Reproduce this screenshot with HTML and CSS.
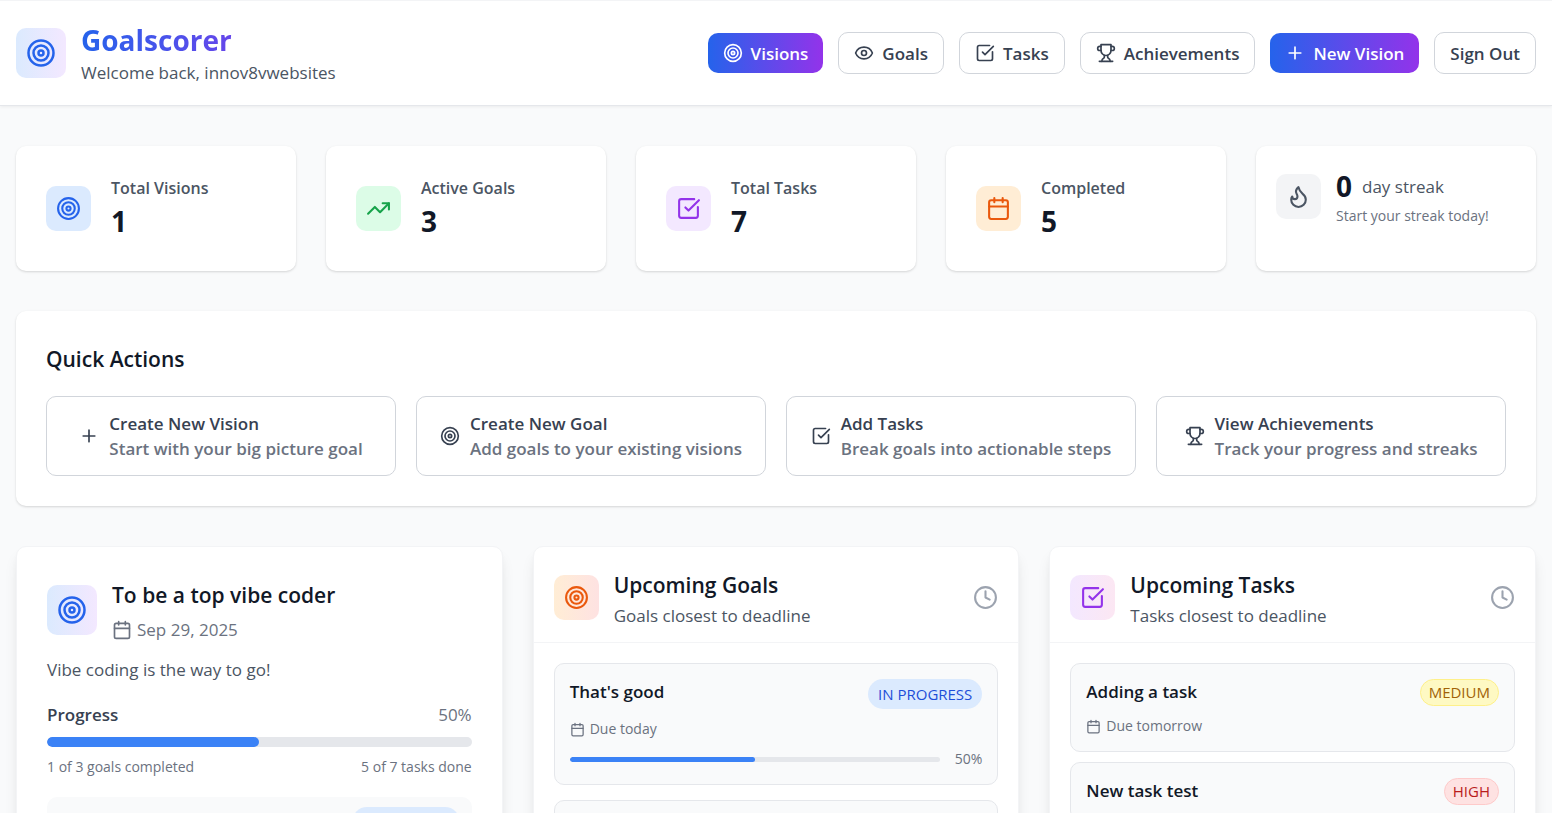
FILE: index.html
```html
<!DOCTYPE html>
<html lang="en">

<head>
  <meta charset="UTF-8">
  <meta name="viewport" content="width=device-width, initial-scale=1.0">
  <title>Goalscorer</title>
  <link rel="stylesheet" href="styles.css">
</head>

<body>
  <!-- icon set -->
  <svg class="sprite" aria-hidden="true">
    <symbol id="target" viewBox="0 0 24 24">
      <circle cx="12" cy="12" r="10" />
      <circle cx="12" cy="12" r="6" />
      <circle cx="12" cy="12" r="2" />
    </symbol>
    <symbol id="eye" viewBox="0 0 24 24">
      <path d="M2.062 12.348a1 1 0 0 1 0-.696 10.75 10.75 0 0 1 19.876 0 1 1 0 0 1 0 .696 10.75 10.75 0 0 1-19.876 0" />
      <circle cx="12" cy="12" r="3" />
    </symbol>
    <symbol id="check" viewBox="0 0 24 24">
      <path d="M21 10.5V19a2 2 0 0 1-2 2H5a2 2 0 0 1-2-2V5a2 2 0 0 1 2-2h12.5" />
      <path d="m9 11 3 3L22 4" />
    </symbol>
    <symbol id="trophy" viewBox="0 0 24 24">
      <path d="M6 9H4.500a2.500 2.500 0 0 1 0-5H6" />
      <path d="M18 9h1.500a2.500 2.500 0 0 0 0-5H18" />
      <path d="M4 22h16" />
      <path d="M10 14.660V17c0 .550-.470.980-.970 1.210C7.850 18.750 7 20.240 7 22" />
      <path d="M14 14.660V17c0 .550.470.980.970 1.210C16.150 18.750 17 20.240 17 22" />
      <path d="M18 2H6v7a6 6 0 0 0 12 0V2Z" />
    </symbol>
    <symbol id="plus" viewBox="0 0 24 24">
      <path d="M5 12h14M12 5v14" />
    </symbol>
    <symbol id="trending" viewBox="0 0 24 24">
      <path d="M16 7h6v6" />
      <path d="m22 7-8.500 8.500-5-5L2 17" />
    </symbol>
    <symbol id="calendar" viewBox="0 0 24 24">
      <path d="M8 2v4M16 2v4M3 10h18" />
      <rect x="3" y="4" width="18" height="18" rx="2" />
    </symbol>
    <symbol id="flame" viewBox="0 0 24 24">
      <path d="M8.500 14.500A2.500 2.500 0 0 0 11 12c0-1.380-.500-2-1-3-1.072-2.143-.224-4.054 2-6 .500 2.500 2 4.900 4 6.500 2 1.600 3 3.500 3 5.500a7 7 0 1 1-14 0c0-1.153.433-2.294 1-3a2.500 2.500 0 0 0 2.500 2.500z" />
    </symbol>
    <symbol id="clock" viewBox="0 0 24 24">
      <circle cx="12" cy="12" r="10" />
      <path d="M12 6v6l4 2" />
    </symbol>
  </svg>

  <header class="header">
    <div class="brand">
      <div class="brand-icon blue-purple"><svg class="icon icon-lg"><use href="#target" /></svg></div>
      <div>
        <h1 class="brand-name">Goalscorer</h1>
        <p class="welcome">Welcome back, innov8vwebsites</p>
      </div>
    </div>
    <nav class="nav">
      <button class="btn btn-primary" type="button"><svg class="icon"><use href="#target" /></svg>Visions</button>
      <button class="btn" type="button"><svg class="icon"><use href="#eye" /></svg>Goals</button>
      <button class="btn" type="button"><svg class="icon"><use href="#check" /></svg>Tasks</button>
      <button class="btn" type="button"><svg class="icon"><use href="#trophy" /></svg>Achievements</button>
      <button class="btn btn-primary" type="button"><svg class="icon"><use href="#plus" /></svg>New Vision</button>
      <button class="btn" type="button">Sign Out</button>
    </nav>
  </header>

  <main class="main">
    <section class="stats">
      <div class="card stat">
        <div class="stat-icon blue"><svg class="icon icon-md"><use href="#target" /></svg></div>
        <div>
          <p class="stat-label">Total Visions</p>
          <p class="stat-value">1</p>
        </div>
      </div>
      <div class="card stat">
        <div class="stat-icon green"><svg class="icon icon-md"><use href="#trending" /></svg></div>
        <div>
          <p class="stat-label">Active Goals</p>
          <p class="stat-value">3</p>
        </div>
      </div>
      <div class="card stat">
        <div class="stat-icon purple"><svg class="icon icon-md"><use href="#check" /></svg></div>
        <div>
          <p class="stat-label">Total Tasks</p>
          <p class="stat-value">7</p>
        </div>
      </div>
      <div class="card stat">
        <div class="stat-icon orange"><svg class="icon icon-md"><use href="#calendar" /></svg></div>
        <div>
          <p class="stat-label">Completed</p>
          <p class="stat-value">5</p>
        </div>
      </div>
      <div class="card streak">
        <div class="stat-icon gray"><svg class="icon icon-md"><use href="#flame" /></svg></div>
        <div>
          <p class="streak-count"><span class="stat-value">0</span> <span class="streak-unit">day streak</span></p>
          <p class="small">Start your streak today!</p>
        </div>
      </div>
    </section>

    <section class="card quick">
      <h2 class="title">Quick Actions</h2>
      <div class="actions">
        <button class="action" type="button">
          <svg class="icon"><use href="#plus" /></svg>
          <span class="action-text">Create New Vision<span class="action-hint">Start with your big picture goal</span></span>
        </button>
        <button class="action" type="button">
          <svg class="icon"><use href="#target" /></svg>
          <span class="action-text">Create New Goal<span class="action-hint">Add goals to your existing visions</span></span>
        </button>
        <button class="action" type="button">
          <svg class="icon"><use href="#check" /></svg>
          <span class="action-text">Add Tasks<span class="action-hint">Break goals into actionable steps</span></span>
        </button>
        <button class="action" type="button">
          <svg class="icon"><use href="#trophy" /></svg>
          <span class="action-text">View Achievements<span class="action-hint">Track your progress and streaks</span></span>
        </button>
      </div>
    </section>

    <section class="panels">
      <article class="panel vision">
        <div class="vision-head">
          <div class="brand-icon blue-purple"><svg class="icon icon-lg"><use href="#target" /></svg></div>
          <div>
            <h2 class="title">To be a top vibe coder</h2>
            <p class="vision-date"><svg class="icon"><use href="#calendar" /></svg>Sep 29, 2025</p>
          </div>
        </div>
        <p class="vision-text">Vibe coding is the way to go!</p>
        <div class="row progress-head">
          <span class="progress-label">Progress</span>
          <span>50%</span>
        </div>
        <div class="bar">
          <div class="bar-fill" style="width: 50%"></div>
        </div>
        <div class="row small vision-counts">
          <span>1 of 3 goals completed</span>
          <span>5 of 7 tasks done</span>
        </div>
        <div class="row vision-goal">
          <span class="item-title">That's good</span>
          <span class="badge badge-sm">IN PROGRESS</span>
        </div>
      </article>

      <article class="panel">
        <div class="panel-head">
          <div class="stat-icon orange-red"><svg class="icon icon-md"><use href="#target" /></svg></div>
          <div class="panel-heading">
            <h2 class="title">Upcoming Goals</h2>
            <p class="panel-sub">Goals closest to deadline</p>
          </div>
          <svg class="icon icon-md clock"><use href="#clock" /></svg>
        </div>
        <div class="list goals">
          <div class="item">
            <div class="row">
              <h3 class="item-title">That's good</h3>
              <span class="badge">IN PROGRESS</span>
            </div>
            <p class="small due"><svg class="icon icon-sm"><use href="#calendar" /></svg>Due today</p>
            <div class="item-progress">
              <div class="bar bar-thin">
                <div class="bar-fill" style="width: 50%"></div>
              </div>
              <span class="small">50%</span>
            </div>
          </div>
          <div class="item">
            <div class="row">
              <h3 class="item-title">New goal</h3>
            </div>
          </div>
        </div>
      </article>

      <article class="panel">
        <div class="panel-head">
          <div class="stat-icon purple-pink"><svg class="icon icon-md"><use href="#check" /></svg></div>
          <div class="panel-heading">
            <h2 class="title">Upcoming Tasks</h2>
            <p class="panel-sub">Tasks closest to deadline</p>
          </div>
          <svg class="icon icon-md clock"><use href="#clock" /></svg>
        </div>
        <div class="list tasks">
          <div class="item">
            <div class="row">
              <h3 class="item-title">Adding a task</h3>
              <span class="priority medium">MEDIUM</span>
            </div>
            <p class="small due"><svg class="icon icon-sm"><use href="#calendar" /></svg>Due tomorrow</p>
          </div>
          <div class="item">
            <div class="row">
              <h3 class="item-title">New task test</h3>
              <span class="priority high">HIGH</span>
            </div>
          </div>
        </div>
      </article>
    </section>
  </main>
</body>

</html>
```
FILE: styles.css
```css
* {
  box-sizing: border-box;
}

body {
  margin: 0;
  background: #f9fafb;
  color: #111827;
  font-family: "Segoe UI", "Open Sans", "Noto Sans", sans-serif;
  font-size: 17px;
  line-height: 25px;
}

h1,
h2,
h3,
p {
  margin: 0;
}

button {
  font: inherit;
  cursor: pointer;
}

.sprite {
  display: none;
}

/* Icons */
.icon {
  flex: none;
  width: 20px;
  height: 20px;
  fill: none;
  stroke: currentColor;
  stroke-width: 2;
  stroke-linecap: round;
  stroke-linejoin: round;
}

.icon-sm {
  width: 15px;
  height: 15px;
}

.icon-md {
  width: 25px;
  height: 25px;
}

.icon-lg {
  width: 30px;
  height: 30px;
}

/* Header */
.header {
  display: flex;
  justify-content: space-between;
  align-items: center;
  padding: 20px 16px;
  background: #fff;
  border-top: 1px solid #f3f4f6;
  border-bottom: 1px solid #e5e7eb;
  box-shadow: 0 1px 3px rgba(0, 0, 0, 0.06);
}

.brand {
  display: flex;
  align-items: center;
  gap: 15px;
}

.brand-icon,
.stat-icon {
  display: flex;
  flex: none;
  align-items: center;
  justify-content: center;
  border-radius: 10px;
}

.brand-icon {
  width: 50px;
  height: 50px;
}

.stat-icon {
  width: 45px;
  height: 45px;
}

.brand-name {
  background: linear-gradient(to right, #2563eb, #9333ea);
  background-clip: text;
  -webkit-background-clip: text;
  color: transparent;
  font-size: 28px;
  font-weight: 700;
  line-height: 39px;
}

.welcome {
  color: #4b5563;
}

.nav {
  display: flex;
  align-items: center;
  gap: 15px;
}

.btn {
  display: flex;
  align-items: center;
  gap: 8px;
  height: 42px;
  padding: 0 15px;
  border: 1px solid #d1d5db;
  border-radius: 10px;
  background: #fff;
  color: #374151;
  font-weight: 600;
}

.btn-primary {
  height: 40px;
  border: 0;
  background: linear-gradient(to right, #2563eb, #9333ea);
  color: #fff;
}

/* Icon backgrounds */
.blue-purple {
  background: linear-gradient(to right, #dbeafe, #f3e8ff);
  color: #2563eb;
}

.orange-red {
  background: linear-gradient(to right, #ffedd5, #fee2e2);
  color: #ea580c;
}

.purple-pink {
  background: linear-gradient(to right, #f3e8ff, #fce7f3);
  color: #9333ea;
}

.blue {
  background: #dbeafe;
  color: #2563eb;
}

.green {
  background: #dcfce7;
  color: #16a34a;
}

.purple {
  background: #f3e8ff;
  color: #9333ea;
}

.orange {
  background: #ffedd5;
  color: #ea580c;
}

.gray {
  background: #f3f4f6;
  color: #4b5563;
}

/* Page */
.main {
  display: flex;
  flex-direction: column;
  gap: 40px;
  padding: 40px 16px;
}

.card {
  background: #fff;
  border-radius: 10px;
  box-shadow: 0 1px 3px rgba(0, 0, 0, 0.1), 0 1px 2px rgba(0, 0, 0, 0.06);
}

.title {
  font-size: 21px;
  font-weight: 600;
  line-height: 36px;
}

.small {
  color: #6b7280;
  font-size: 14px;
  line-height: 20px;
}

.row {
  display: flex;
  justify-content: space-between;
  align-items: flex-start;
}

/* Stats */
.stats {
  display: grid;
  grid-template-columns: repeat(5, 1fr);
  gap: 30px;
}

.stat {
  display: flex;
  align-items: center;
  gap: 20px;
  padding: 30px;
}

.stat-label {
  color: #4b5563;
  font-size: 16px;
  font-weight: 600;
}

.stat-value {
  font-size: 28px;
  font-weight: 700;
  line-height: 40px;
}

.streak {
  display: flex;
  align-items: center;
  gap: 15px;
  padding: 20px 20px 45px;
}

.streak-count {
  display: flex;
  align-items: center;
  gap: 10px;
}

.streak-unit {
  color: #4b5563;
}

/* Quick actions */
.quick {
  padding: 30px;
}

.actions {
  display: grid;
  grid-template-columns: repeat(4, 1fr);
  gap: 20px;
  margin-top: 19px;
}

.action {
  display: flex;
  align-items: center;
  justify-content: center;
  gap: 10px;
  padding: 14px 15px;
  border: 1px solid #d1d5db;
  border-radius: 10px;
  background: #fff;
  color: #374151;
  font-weight: 600;
  text-align: left;
}

.action-hint {
  display: block;
  color: #6b7280;
}

/* Panels */
.panels {
  display: grid;
  grid-template-columns: repeat(3, 1fr);
  gap: 30px;
}

.panel {
  background: #fff;
  border: 1px solid #f3f4f6;
  border-radius: 10px;
  box-shadow: 0 10px 15px -3px rgba(0, 0, 0, 0.1), 0 4px 6px -2px rgba(0, 0, 0, 0.05);
}

.vision {
  padding: 30px;
}

.vision-head {
  display: flex;
  align-items: center;
  gap: 15px;
}

.vision-date {
  display: flex;
  align-items: center;
  gap: 5px;
  margin-top: 4px;
  color: #6b7280;
}

.vision-text {
  margin: 15px 0 20px;
  color: #4b5563;
}

.progress-head {
  margin-bottom: 10px;
  color: #6b7280;
}

.progress-label {
  color: #374151;
  font-weight: 600;
}

.bar {
  flex: 1;
  height: 10px;
  border-radius: 5px;
  background: #e5e7eb;
  overflow: hidden;
}

.bar-thin {
  height: 5px;
}

.bar-fill {
  height: 100%;
  border-radius: 5px;
  background: #3b82f6;
}

.vision-counts {
  margin: 10px 0 20px;
}

.vision-goal {
  padding: 10px 12px;
  border-radius: 10px;
  background: #f9fafb;
}

.panel-head {
  display: flex;
  align-items: center;
  gap: 15px;
  padding: 20px 20px 14px;
  border-bottom: 1px solid #f3f4f6;
}

.panel-heading {
  flex: 1;
}

.panel-sub {
  color: #4b5563;
}

.clock {
  color: #9ca3af;
}

.list {
  display: flex;
  flex-direction: column;
  padding: 20px;
}

.goals {
  gap: 15px;
}

.tasks {
  gap: 10px;
}

.item {
  padding: 15px;
  border: 1px solid #e5e7eb;
  border-radius: 10px;
  background: #f9fafb;
}

.item-title {
  font-size: 17px;
  font-weight: 600;
}

.badge {
  padding: 5px 10px;
  border-radius: 15px;
  background: #dbeafe;
  color: #1d4ed8;
  font-size: 15px;
  line-height: 20px;
}

.badge-sm {
  font-size: 14px;
}

.priority {
  padding: 2px 8px 3px;
  border: 1px solid;
  border-radius: 14px;
  font-size: 15px;
  line-height: 20px;
}

.medium {
  border-color: #fef08a;
  background: #fef9c3;
  color: #a16207;
}

.high {
  border-color: #fecaca;
  background: #fee2e2;
  color: #b91c1c;
}

.due {
  display: flex;
  align-items: center;
  gap: 5px;
  margin-top: 10px;
}

.item-progress {
  display: flex;
  align-items: center;
  gap: 15px;
  margin-top: 10px;
}
```
